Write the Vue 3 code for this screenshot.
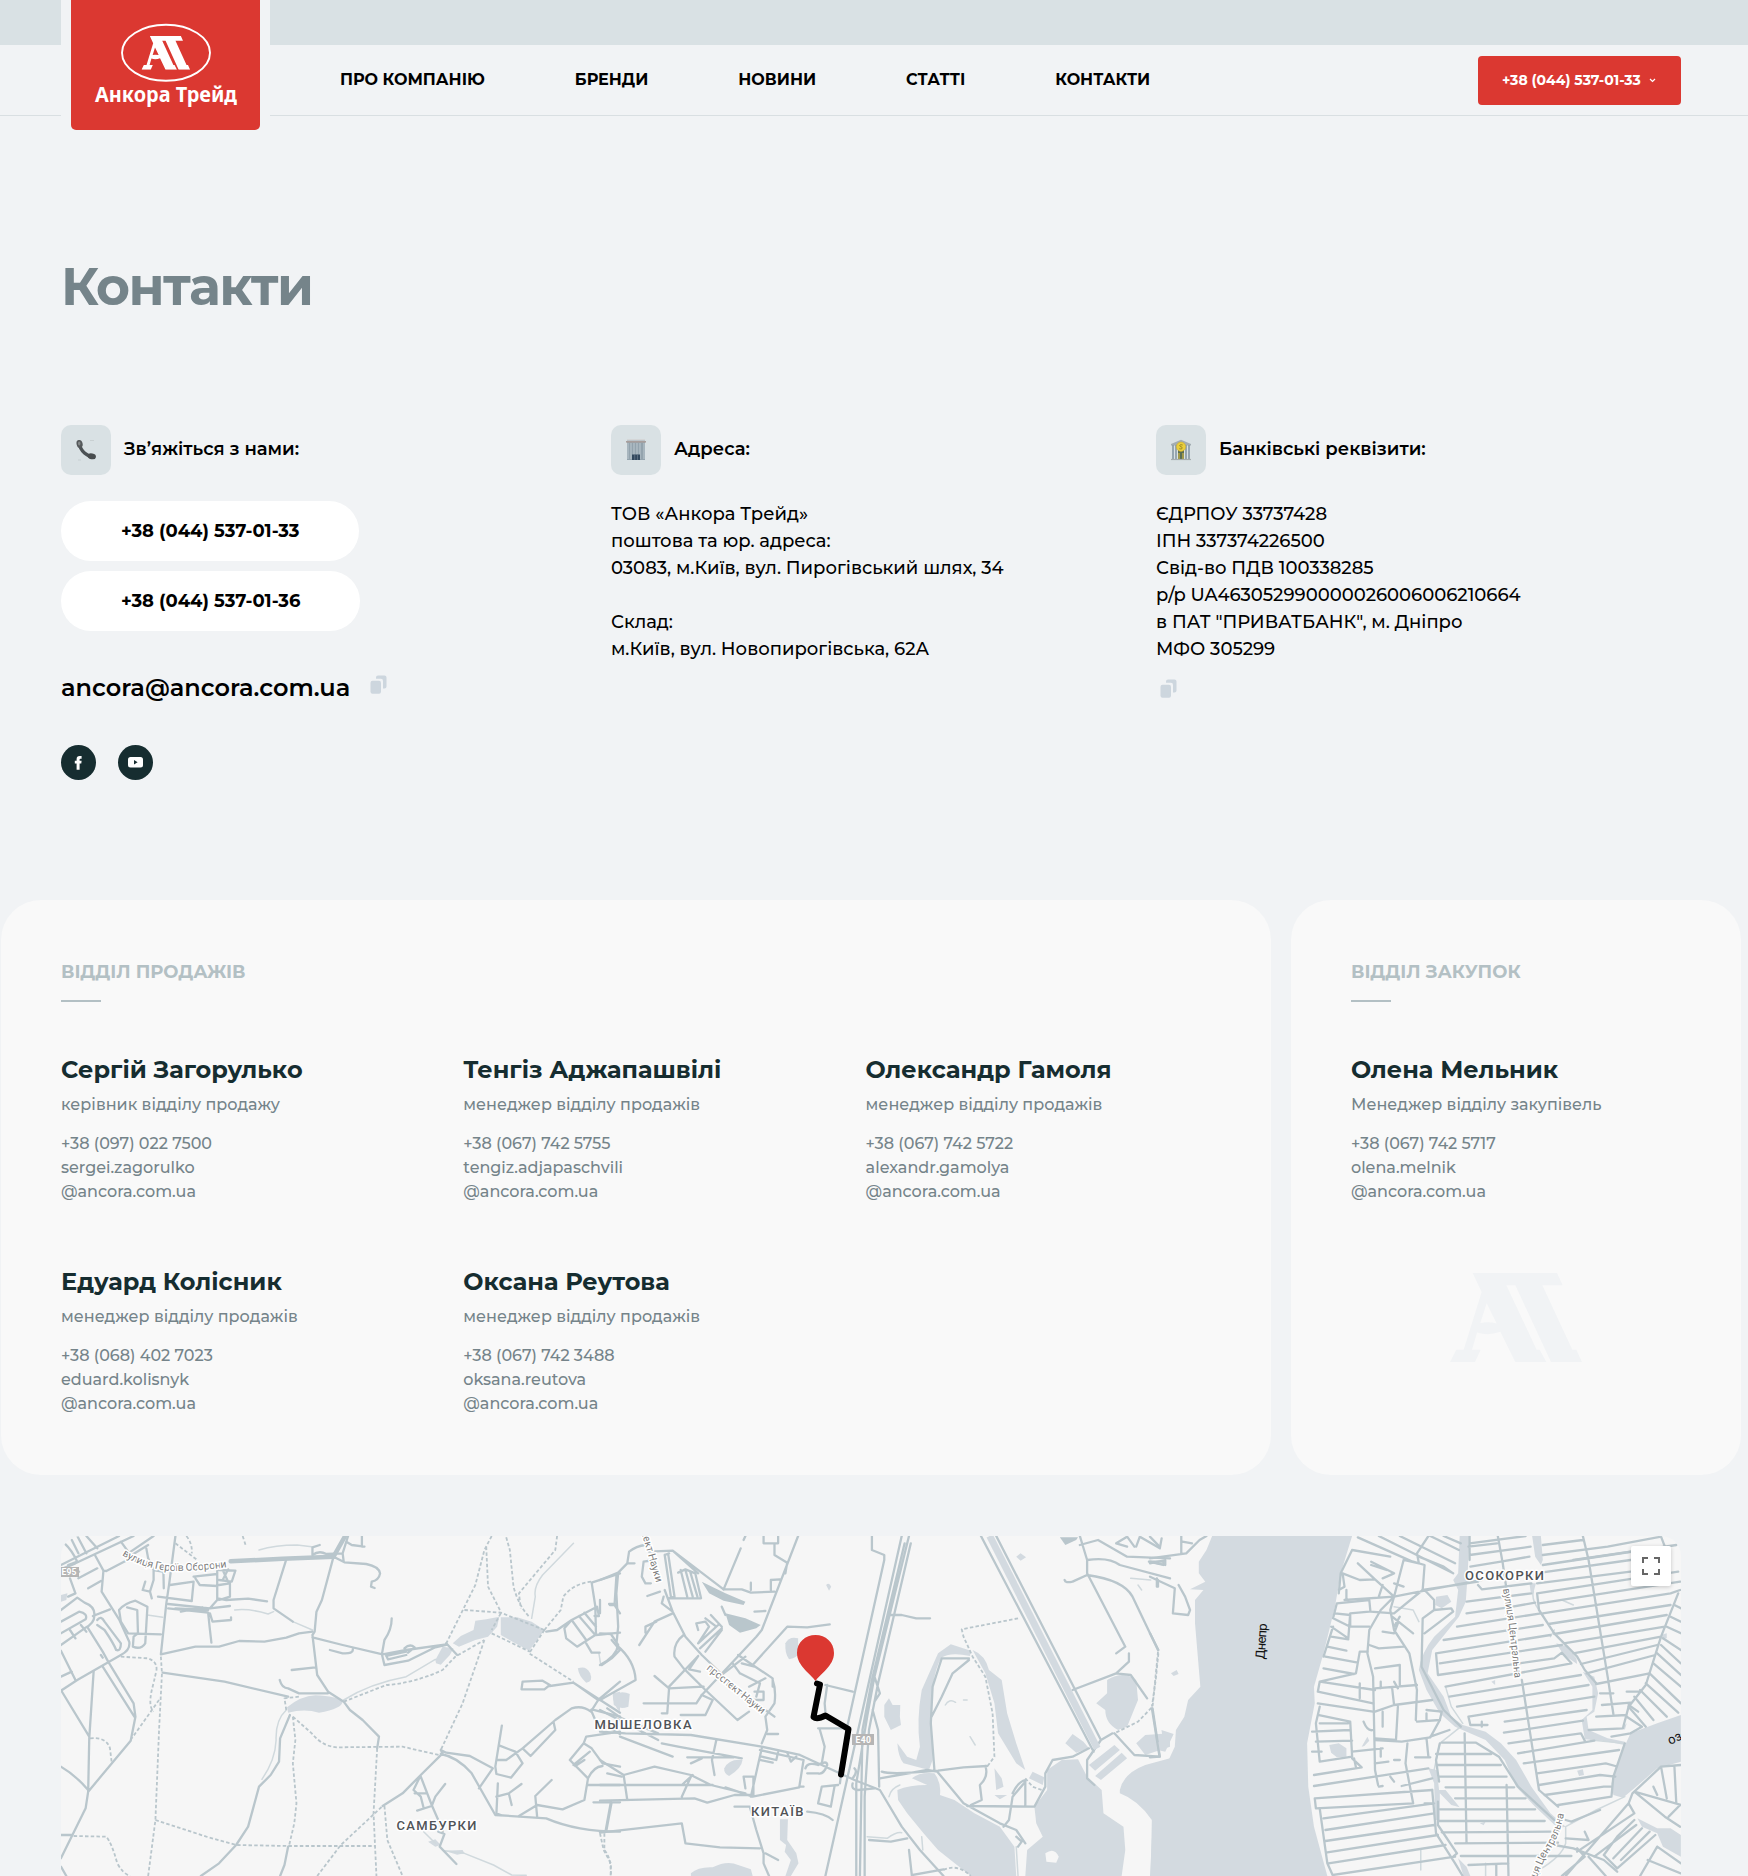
<script setup>
const nav = ['Про компанію', 'Бренди', 'Новини', 'Статті', 'Контакти']

const phones = ['+38 (044) 537-01-33', '+38 (044) 537-01-36']

const address = [
  'ТОВ «Анкора Трейд»',
  'поштова та юр. адреса:',
  '03083, м.Київ, вул. Пирогівський шлях, 34',
  '',
  'Склад:',
  'м.Київ, вул. Новопирогівська, 62А',
]

const bank = [
  'ЄДРПОУ 33737428',
  'ІПН 337374226500',
  'Свід-во ПДВ 100338285',
  'p/p UA463052990000026006006210664',
  'в ПАТ "ПРИВАТБАНК", м. Дніпро',
  'МФО 305299',
]

const departments = [
  {
    title: 'Відділ продажів',
    kind: 'sales',
    people: [
      { name: 'Сергій Загорулько', role: 'керівник відділу продажу', phone: '+38 (097) 022 7500', mail: 'sergei.zagorulko' },
      { name: 'Тенгіз Аджапашвілі', role: 'менеджер відділу продажів', phone: '+38 (067) 742 5755', mail: 'tengiz.adjapaschvili' },
      { name: 'Олександр Гамоля', role: 'менеджер відділу продажів', phone: '+38 (067) 742 5722', mail: 'alexandr.gamolya' },
      { name: 'Едуард Колісник', role: 'менеджер відділу продажів', phone: '+38 (068) 402 7023', mail: 'eduard.kolisnyk' },
      { name: 'Оксана Реутова', role: 'менеджер відділу продажів', phone: '+38 (067) 742 3488', mail: 'oksana.reutova' },
    ],
  },
  {
    title: 'Відділ закупок',
    kind: 'purchase',
    people: [
      { name: 'Олена Мельник', role: 'Менеджер відділу закупівель', phone: '+38 (067) 742 5717', mail: 'olena.melnik' },
    ],
  },
]

const emblem =
  'M668 994H921L938 1025H877L967 1187H979L996 1218H903L796 1025H769L860 1187H869L889 1218H796L751 1142Q715 1153 681 1144L666 1187H692L675 1218H600L619 1187H641L695 1042ZM710 1070L691 1120Q715 1116 740 1121Z'

/* Map tiles: each one has its own coordinate space, scaled into the map. */
const tiles = [
  {
    id: 'west',
    transform: 'translate(-11 -6) scale(.36352 .33333)',
    water: [
      'M652 532Q690 498 730 496Q790 498 804 515Q805 535 740 548Q700 535 655 548Z',
      'M1108 340L1130 318L1165 300L1170 272L1200 268L1236 260L1230 290L1205 320L1170 330L1125 350Z',
      'M1240 262L1285 262L1325 275L1360 300L1318 362L1280 340L1240 315Z',
      'M1060 390L1080 350L1110 355L1100 375L1075 404L1062 400Z',
      'M1452 415Q1475 405 1486 430Q1495 455 1475 458Q1455 440 1452 415Z',
      'M1548 490L1568 485V545Q1550 530 1548 490Z',
      'M1040 935L1060 928L1075 945L1060 950ZM1085 962L1135 960L1140 970L1120 974Z',
      'M30 195L48 190L45 210L30 215Z',
    ],
    major: ['M497 94L640 86L780 80', 'M780 80L812 18'],
    roads: [
      'M30 105L85 75L190 18M30 118L70 100L230 18M75 18L100 70M100 18L130 55M60 30L78 70M40 40Q60 60 75 95L50 105M78 145L130 115M60 130L80 125M195 35L215 65M155 123L230 80M215 70L285 18M225 75L270 45M125 78L147 122L142 185L190 268L218 335Q222 360 195 375L75 450L30 482M147 122L155 123M105 175L140 153M50 200L70 190L55 145',
      'M30 240L75 203L95 218Q125 230 122 258Q122 280 95 295L30 345M30 275L80 245Q105 250 98 268L30 310M55 300L70 325M85 285L100 305M118 258L165 238M130 270Q140 255 150 275L195 340Q195 365 182 360Q175 340 150 300L130 285M105 295L145 365L160 395L230 520L235 560L222 632L105 785M145 410L232 560M30 362L70 450M30 440L60 425M140 375L145 383M120 425L108 625L105 785L98 835L30 985M30 480L108 620M30 710Q70 735 105 780M30 1010L45 1038M30 915L60 915',
      'M345 18L328 160L320 220L305 373L400 350L465 350L520 333L590 335L650 323L685 310L722 305M310 428L480 455L655 500M190 240Q205 220 235 212L268 230L262 340Q250 360 228 350L230 320L242 310L240 240L212 232M190 240L195 275L215 310L305 313M265 55L270 85L285 120L285 150L275 185L255 180L262 155M275 185L280 205M312 125L313 175M285 120L310 125M297 200L390 213L395 155L330 165M395 140L460 132M400 145L412 165L460 168M460 115V210L440 235L325 222M325 235L435 248L440 300L444 338M345 235L435 240M360 245L420 232M440 235L495 228M440 250L447 275L498 270V262M465 120L510 122L500 155L465 150M475 120L490 155M490 118L475 150M465 165L495 160V200L465 210L485 205M460 205L485 210L545 206L597 214',
      'M650 88L615 210V235L668 275M780 80L748 210L733 245L728 305L722 315L735 435L765 485L808 515L825 540L860 570L905 620L900 655M722 322L805 345L915 373L980 360L1090 343M940 265Q940 300 920 330L913 373L920 405L985 392L1060 352L1090 345M925 378L980 365M925 378L930 388L980 375M975 355Q990 340 1003 352L985 368M1090 340L1120 375M770 360L805 370Q835 372 833 358M665 420L730 412M632 450Q638 475 655 475L685 490H765M780 80L810 97L870 102Q905 110 908 130Q905 150 885 155L883 170L893 174M722 75V52L742 45M722 75Q740 60 760 72L805 70L820 18M815 35L830 45L865 50M858 18V50M805 70L808 95',
      'M660 555L633 625L630 695L607 735L575 770L545 890L512 945L465 1000L415 1038M655 950L645 1005L633 1038M1075 660L1080 670L1020 735L970 790L915 828M1075 672Q1120 680 1160 730L1225 855L1365 865Q1450 905 1568 905M1075 660L1090 668L1155 678L1218 715L1180 775M1020 735L1000 780L1020 800L1028 835M1020 740L1050 825L1080 900V910M1003 790H1035M1010 842L1050 828L1060 800L1087 762M1068 905L1085 912L1072 950L1118 1002',
      'M1243 587L1225 710L1228 732L1268 743L1300 700L1280 665L1237 647M1228 690L1255 690L1300 655L1390 570L1435 535Q1465 525 1488 545L1508 510L1568 455M1385 575L1390 600L1322 678L1300 655M1488 540L1500 570L1568 612M1490 538L1568 560M1232 760L1228 850L1240 855M1228 800L1262 790L1297 762M1262 790L1270 825M1290 858L1340 825L1410 838L1470 810L1480 745L1430 690L1468 640L1490 655L1520 700L1568 710M1440 705L1485 665M1445 708L1470 690M1480 745Q1495 710 1520 708M1468 640L1475 620L1568 605M1480 765H1568M1495 817H1568M1545 817L1530 905M1340 860L1335 798L1380 750',
      'M1297 478L1300 455L1355 452L1375 465L1360 478ZM1375 468L1440 458L1568 548M1440 458L1508 510M1490 158L1500 228L1502 315L1568 308M1490 158L1568 130M1365 305L1395 300L1435 270L1505 230L1510 258L1498 258M1435 270L1415 295L1420 325L1450 350L1500 315M1435 270L1475 330M1455 258L1500 315M1470 248L1502 290M1475 340L1490 368H1512M1545 330L1568 360L1545 385L1518 405M1558 140L1553 225L1568 250M1540 225H1553',
    ],
    minor: [
      'M575 60Q620 45 680 45L720 50M508 240Q550 235 600 252L615 245M668 275L722 300M808 510Q880 460 980 440L1060 388M1440 40L1355 135Q1330 170 1335 200L1325 265M650 540Q620 570 622 630Q620 690 583 748M268 255L310 262M1028 905L1060 940M1085 962L1140 970L1220 1005L1270 1035L1310 1036M1510 370L1515 405',
    ],
    paths: [
      'M305 380L308 430L300 600L290 870L270 1038M195 380L270 385Q295 395 293 420Q285 460 280 480Q270 530 285 545M300 510L225 625M110 625Q155 620 165 655L170 700M65 918L155 920Q170 940 185 1000Q200 1030 220 1038M290 870L430 920L512 945L655 948H895M345 40L405 90M375 18Q392 40 390 70M530 18L538 45',
      'M650 540L645 505L685 500M808 515L925 465Q1000 460 1080 420L1115 380L1195 330M668 560L675 630L668 700L678 820L672 880L658 945M668 560L720 610Q750 650 790 652L970 650L1070 675M900 655L890 850L898 1038M735 1038L800 945L915 828M920 828L928 930L970 1038M1195 330L1135 520L1075 660',
      'M1215 18L1195 60L1170 165L1090 340M1200 50L1205 170L1240 245M1140 240L1240 248L1360 300M1255 22L1265 60L1275 170Q1290 230 1320 262M1395 18L1390 60L1290 190L1295 235M1360 300L1318 370L1440 455M1215 310L1320 365M1360 300L1405 240L1412 200Q1440 160 1490 155M1240 250L1215 300M1525 910V960Q1545 985 1542 1038',
    ],
  },
  {
    id: 'centre',
    transform: 'translate(539 -6) scale(.36352 .33333)',
    water: [
      'M510 340Q520 318 545 325V370Q545 382 520 388Q508 370 510 340Z',
      'M35 495Q60 480 82 492L78 530Q55 540 38 525Z',
      'M342 715Q355 685 392 690Q390 715 355 738Q340 730 342 715Z',
      'M622 165Q630 155 636 170L630 182ZM1145 80L1157 70L1172 82L1157 92Z',
      'M782 525L795 505L805 525L826 525L825 560L828 585L800 600L782 560ZM818 640L845 680L870 690L880 650Q870 570 885 480L930 370L965 343L1020 362L1018 378Q960 365 938 385Q910 440 912 560L915 690L905 720L835 700Q820 680 818 640Z',
      'M1025 360Q1060 375 1070 420L1105 450L1120 550L1145 640L1170 720L1145 700L1095 610L1085 520L1060 430Z',
      'M818 780Q850 765 900 765L858 745Q880 725 920 730Q940 760 935 795L975 810L1030 850L1100 890L1140 950L1145 1038H1020L930 960L890 910L845 850L820 810Z',
      'M1200 880L1195 830L1230 780V720L1270 690L1315 688L1340 740L1380 780L1385 850L1440 890L1445 960L1435 1038H1170L1175 960L1218 920Z',
      'M1430 780Q1440 730 1500 705L1568 685V1038H1515L1518 870Q1480 810 1430 790Z',
      'M1365 520L1395 490V450Q1440 420 1475 450L1480 510L1450 590L1425 600Q1390 580 1390 540Z',
      'M1280 640L1300 612L1330 635L1345 655L1310 668ZM1475 640L1500 615L1568 610V650L1500 675Z',
      'M1345 705L1415 645L1430 660L1362 722ZM1362 738L1435 668L1450 685L1378 750Z',
      'M1085 715L1105 745L1110 770L1090 780ZM1085 795H1120L1100 808ZM1180 745L1190 725L1222 742L1218 765Z',
      'M495 868H517L515 930L540 970L546 1000L525 1038H510L525 990L508 965L512 945L495 930Z',
      'M250 1030Q270 1010 310 1012Q350 990 380 1005L415 1018L420 1038H250Z',
    ],
    holes: ['M1225 970Q1250 950 1262 980L1255 998L1228 995Z'],
    major: ['M1072 18L1368 655'],
    heavy: ['M280 155L345 190L400 215L395 225L340 212L300 190ZM345 250L400 265L442 285L430 295L385 308L355 285Z', 'M1265 22H1315L1310 30L1280 45Z'],
    roads: [
      'M545 18L445 300L430 320L280 495M387 55L340 178M400 18L395 30M450 18V40H490V18M480 42V75L515 98M515 98L510 130M470 180V150L495 148M340 178L390 178L415 188L480 185M415 158V180M75 100L80 65Q100 48 125 45M75 100L50 128L0 150M75 100H95M50 128L45 190L50 290L45 345Q95 390 98 450L0 510M25 222H45M0 310L30 312L50 345Q45 380 0 405M0 210V250',
      'M135 65L200 62L340 178M200 62L270 130M178 75L195 200M188 75L205 200L190 205H278L262 130L235 118L215 128M222 120L240 200M235 120L255 200M248 125L268 200M178 75L190 70M120 95L150 90M120 95L115 140L125 160L140 160M178 180L200 245L235 320L280 375L380 480L480 560M165 185L130 198M175 200L170 220L200 245M200 250L150 275L108 345M155 275L125 290V308',
      'M230 315Q200 340 205 380L230 415L290 480L378 570L410 545M150 438L190 475L285 470M190 475L185 550H170M120 520H265L280 495L310 510L290 555H222M270 378L190 470M270 378L245 418L275 425M345 255L335 230M425 245L455 243M270 340L325 285M275 355L335 295M290 365L335 300M270 300L265 280L290 275L300 290L270 340M290 265L320 290M305 255L335 290M420 405L515 290L570 292L632 283M420 405L380 375M340 430L400 380M425 410L390 400M420 405L475 445V470M365 400L385 430M385 430L440 460L430 500M410 470L455 445M425 485H450V510H415M475 450Q485 480 480 520L455 560L460 600L445 640M460 612H490',
      'M830 18L620 1038M850 18L755 440L735 560L705 760V1038M838 40L748 450L722 600L715 1038M855 40L765 460L740 600L728 800V1038M748 18V60L782 75V90L680 590L660 760M620 465L695 485M625 465L618 520L620 545M600 595H680M605 600L618 650L610 700M755 440L770 490L755 515M750 540L765 600L768 770M800 255L830 255L870 265H908',
      'M0 605L70 610L250 615L445 650M445 655L415 800M445 650L550 675L700 750L770 780L830 890L880 960L945 1038M0 540L160 630M20 535L60 565L160 610M55 620L200 680M320 630L308 690L315 735M240 682H368M250 700L280 685M170 640L215 650L390 685M0 690L65 735L150 710L250 735L305 765L400 790M65 735L75 810M0 765L225 765L310 765M225 765L255 735M345 772L420 800L548 772L560 690L440 660M250 740L225 800M0 812L260 805L295 818L370 795H415M395 740H422V795M395 740L400 775M370 830H412L430 900L450 970V1000L465 1038M30 815L15 905L0 908L225 880L235 940L330 952L440 955M455 970L490 990M548 770H560M515 668L525 695L540 680M565 715Q570 695 600 705M600 705Q625 690 625 705Q615 735 600 730L570 730M445 680L485 690L490 665M440 690L475 698',
      'M655 765L610 770L600 820L635 830L645 770M570 845Q620 850 640 870M695 760Q690 780 710 780L755 775M700 715Q710 725 695 745M770 745L900 720L928 725L1000 820L1100 880L1145 900L1170 940M775 725Q800 735 930 722L1000 712L1065 708M1060 708Q1070 740 1045 765L1050 810L1020 825M1010 828L1195 830L1225 770L1225 730L1245 690L1300 680L1345 655M1015 385L940 385L915 470L910 580L920 720M1015 390L970 430L940 500L912 560M1135 790Q1150 755 1170 750V825M1170 755L1135 800L1125 870L1110 890M1145 920L1160 935L1150 950M740 930L800 935L845 925M850 960L858 1038M860 1035L945 1018',
      'M1048 18L1358 665M1090 18L1378 630L1340 690V745L1360 765M1320 18L1340 90V130L1445 350L1420 370M1455 370L1455 395L1420 430L1300 480M1420 430L1460 435L1505 505M1340 90Q1400 80 1430 105L1568 145M1320 45L1370 30L1450 80L1568 85M1278 150Q1280 160 1300 155L1340 135Q1440 150 1465 200L1535 360M1420 40L1450 50M1420 40L1450 20L1470 50M1475 50L1485 20L1540 55L1545 25M1510 95H1550V105L1510 95M1520 535L1540 680L1470 675L1415 610M1378 630L1410 610M1535 150V170M20 730L60 740',
    ],
    minor: ['M735 920L790 925Q815 905 830 908M795 800Q800 775 825 765M885 920L888 960M1145 950L1150 1038M1018 620L1032 645M950 525Q960 505 978 517M1000 510H1010M1460 145L1515 150M1480 165L1490 180'],
    paths: [
      'M1150 265L995 298L1000 320L1025 380L1060 440L1080 550L1085 680L1065 710M1535 365L1520 530L1480 575L1415 610M0 910L10 960L30 1000V1038M945 1020Q985 1000 1020 1038M1170 745L1190 770L1215 780',
    ],
  },
  {
    id: 'east',
    transform: 'translate(1089 -6) scale(.38137 .33333)',
    water: [
      'M163 18H530L500 130L485 230L455 370L430 470L432 520L412 640L415 770L430 890L465 1038H0L8 860L0 780V712H40L65 650L68 600L90 560L100 510L132 470L118 280V210L140 180L105 178L145 155L128 130V95L148 60Z',
      'M812 18H838L832 150L828 215L810 260L740 360L728 430L770 500L790 560L820 585L880 605L920 640L960 690L1000 770L1050 850L1090 890L1070 895L1010 830L960 770L930 690L880 630L800 590L760 550L725 480L705 420Q710 370 745 320L800 260L808 180L795 150L808 130Z',
      'M1002 18H1025L1030 90L1025 105L1010 80ZM995 160H1012L1005 190L998 185ZM1065 340L1090 348L1118 385L1120 402L1085 375ZM1135 425L1165 440L1175 490L1165 545L1145 560L1150 600L1200 625L1245 635V645L1185 632L1140 628L1132 570L1160 540V470Z',
      'M1392 555L1330 580L1260 610L1240 660L1210 760L1215 795L1240 803L1270 775L1330 715L1392 695Z',
      'M1278 865L1330 895L1365 895L1392 915V980L1345 950L1330 910L1290 890Z',
      'M470 645L495 640L515 655V680L490 682L475 668ZM750 200L780 195L790 215L765 235L748 225ZM555 650L570 620L575 632L562 648Z',
      'M1340 315L1355 310V325L1342 328ZM1120 722L1135 718L1138 735L1125 738ZM895 455L905 450V465ZM865 880L880 875L875 886ZM55 430L70 420L75 432L62 438ZM30 600L62 612L40 665L0 655V638L35 635Z',
      'M730 715L752 720L758 780L775 780L812 832L790 825L760 790V870L748 870L745 760ZM808 985L830 1010L840 1038H822ZM1240 590L1250 580L1245 600Z',
    ],
    major: [],
    roads: [
      'M530 60L500 130L495 190M530 60L630 80M545 22L688 95M600 18L795 130M655 18L800 100M735 18L810 60M770 18L815 40M730 18L700 70L705 100L665 90L640 200L605 240L575 300L570 370L585 440L590 720L598 765M690 95L720 105L715 180M705 80L770 110L795 130M495 180L510 170L505 130L550 150L590 148L640 200L510 210M545 100L590 148M580 95L640 130L610 145M620 120L580 105M640 160L665 170M610 165L600 200M515 180V210',
      'M490 220L575 210L578 245L640 250L715 180L860 155M490 220L480 265L525 290L575 290M485 250L525 255V290M575 245L525 250L520 325L475 290M640 200L750 175L870 150M640 200L630 240L640 300L680 370L700 480L697 570M720 180L745 210V240L715 265L712 410L770 540L815 590M635 260L690 310M640 290L655 260M745 240L790 235L795 245L720 310M575 345L600 355L665 350M610 305L640 310L650 280M455 380L480 290M475 320L520 328M465 350L515 362M460 380L545 398M455 415L535 432M445 455L540 430L550 365H570M445 455L440 485L585 520M445 455L590 480M550 460V505M590 475L700 465M590 415L655 405V465M605 455V475M640 455L650 475M635 475L640 525L590 545M440 520L585 545M640 525L740 510M650 530L645 630L590 625M610 545V590M700 575L760 570L765 545L725 540M725 550V570',
      'M445 530L435 580L445 695L530 680L525 575L440 555M425 605L525 600M435 635L530 632M425 665H450M530 685L555 712M530 665L610 655M535 685L540 712M445 580L520 580M560 575Q570 605 585 600M675 640L670 700L690 820L435 835L432 805L740 780M430 735L555 712M430 768L730 715M590 700L625 695M640 690H655M605 655V680M660 768L740 745M600 770L610 768M630 740L640 755M695 682H735M590 630L660 635L735 622L760 570M725 625L730 680M735 620L785 600',
      'M740 780L750 910L800 1000L820 1038M445 835L465 1000L480 1038M455 865L745 820M460 900L745 850M460 933L745 885M465 967L755 915M468 1000L775 945M480 1035L800 980M720 820H740M760 640L750 690L758 755M755 815L755 885L805 970L795 980',
      'M765 638H855L915 680L965 770L1060 870M750 672L895 672M755 705H920M758 740H935M775 772H955M800 805H985M760 838H1010M755 873H1035M765 907L1050 905M800 940L1070 938M815 978L1105 978M835 1005L940 1000M825 610L830 940M935 765L940 1038M908 1005V1038M838 75L998 50M835 50L910 40M838 40L985 18M838 18V90M840 110L920 95L995 80M860 165L870 178L1000 160M830 215L1000 190M830 250L940 232L1010 218M805 290L1025 250M770 330L1030 285M750 370L1050 315M750 370L755 435L1060 385L1080 368L1105 400L775 470M760 400L1080 345M785 500L1130 435M805 530L1150 465M835 560L1165 500M835 560L840 585L885 585M870 575V590M930 575L1145 540M928 608L1135 572M940 640L1130 610L1140 632M965 670L1165 632M980 700L1230 660',
      'M912 18L925 100L935 180M975 450L1020 780L1070 830M1135 18L1150 90L1200 440L1215 552M1030 45L1135 30M1030 75L1200 50L1340 20M1030 105L1380 45M1025 128L1260 90M1015 160L1260 125M1015 190L1300 140L1385 125M1020 220L1390 155M1030 250L1365 190L1390 180M1045 282L1365 225M1060 312L1355 255M1085 340L1350 290M1110 370L1340 320M1130 402L1330 345M1145 430L1325 375M1170 462L1310 430M1015 190L1020 240L1060 310L1120 380L1140 420L1170 460M1340 20L1350 50M1385 190L1340 320L1300 465L1255 530L1240 595M1180 490H1215M1250 485H1285M1185 525L1260 518M1170 560L1250 555M1150 600L1240 595M1210 620L1260 610M1255 525L1280 545M1250 560L1290 590L1260 610',
      'M1375 225L1392 235M1365 260L1392 275M1355 290L1392 310M1345 325L1392 360M1340 345L1392 400M1330 370L1392 435M1320 400L1392 470M1310 430L1392 520M1300 460L1385 548M1285 480L1355 560M1270 500L1320 570M1255 530L1300 590',
      'M1015 730L1195 700L1220 708M1020 765L1180 735L1220 740M1035 795L1190 770H1210M1070 825L1210 800M1245 640L1215 740L1210 800M1392 705L1340 710L1265 790L1255 820L1090 1038M1255 820L1270 850L1120 965M1090 870L1105 875L1180 840M1340 710L1355 805M1375 708L1380 820M1270 785L1392 825M1270 785L1350 860L1390 890M1390 825L1360 860M1320 770L1330 795M1060 945L1110 955L1190 990L1225 1025M1120 955L1140 980L1080 1038M1190 975L1225 920L1270 870M1165 980L1275 885M1215 985L1290 895M1235 990L1310 905M1190 975L1225 1015L1325 915M1330 950L1285 1038M1330 950L1392 1000M1305 990L1392 1030M1150 980L1195 1038M1090 925L1150 930L1140 905',
      'M0 20L25 50M0 85L95 70L130 30L148 18M0 100L40 90V105L0 95M82 18V70M85 35L110 40M0 140L65 175L60 250L100 255L105 240L92 200L75 165M18 145V170M0 310L22 360M5 535L25 680L0 682M1110 90L1260 65',
    ],
    minor: ['M815 590L760 640L745 720M1245 800L1170 840L1090 890V940Q1080 980 1020 1020M1080 210L1110 225M1060 300L1050 320M640 230L690 240L705 275M1155 630L1245 640M775 470L790 530L820 580M710 960V1020M880 1000V1038M1020 240Q1000 210 1005 185'],
    paths: ['M22 370L15 450L5 530'],
  },
]
</script>

<template>
  <div class="page">
    <header class="header">
      <div class="strip"></div>
      <div class="bar">
        <nav class="nav">
          <a v-for="item in nav" :key="item">{{ item }}</a>
        </nav>
        <button class="call">
          <span>+38 (044) 537-01-33</span>
          <svg width="7" height="5" viewBox="0 0 7 5"><path d="M1 1L3.500 3.500L6 1" fill="none" stroke="#fff" stroke-width="1.2" /></svg>
        </button>
      </div>
      <a class="logo">
        <svg width="189" height="130" viewBox="0 0 189 130">
          <ellipse cx="95" cy="52.800" rx="44" ry="28" fill="none" stroke="#fff" stroke-width="1.900" />
          <svg x="70.500" y="36" width="48.600" height="33.700" viewBox="600 994 396 224" preserveAspectRatio="none">
            <path :d="emblem" fill="#fff" fill-rule="evenodd" />
          </svg>
          <text x="24" y="101.500" textLength="142" lengthAdjust="spacingAndGlyphs">Анкора Трейд</text>
        </svg>
      </a>
    </header>

    <main>
      <h1>Контакти</h1>

      <section class="contacts">
        <div class="col reach">
          <div class="head">
            <span class="tile">
              <svg width="22" height="22" viewBox="0 0 22 22">
                <path d="M4 3.500Q5 10 9.500 14T19 17.800" fill="none" stroke="#4c5255" stroke-width="3.400" />
                <ellipse cx="4.600" cy="4.900" rx="3" ry="4" transform="rotate(-15 4.600 4.900)" fill="#55595b" />
                <ellipse cx="16.800" cy="17.300" rx="4.200" ry="2.900" transform="rotate(12 16.800 17.300)" fill="#484c4e" />
                <ellipse cx="4.200" cy="4.600" rx="1.200" ry="2" fill="#85898a" />
                <path d="M15 1.500H19M3 21H6" stroke="#bec4c6" stroke-width=".6" />
              </svg>
            </span>
            <h2>Зв’яжіться з нами:</h2>
          </div>
          <div class="pills">
            <a v-for="p in phones" :key="p" class="pill">{{ p }}</a>
          </div>
          <div class="mail">
            <a>ancora@ancora.com.ua</a>
            <svg class="copy" width="17" height="19" viewBox="0 0 17 19"><rect x=".5" y="5.700" width="10.500" height="13" rx="2" /><path d="M6 3.700V2.500Q6 .5 8 .5H14.500Q16.500 .5 16.500 2.500V11.500Q16.500 13.500 14.500 13.500H13V6Q13 3.700 11 3.700Z" /></svg>
          </div>
          <div class="social">
            <a>
              <svg width="35" height="35" viewBox="0 0 35 35"><path d="M15.600 24.800V18.500H13.800V15.800H15.600V14.200Q15.600 11 18.700 11H20.600V13.700H19.300Q18.600 13.700 18.600 14.500V15.800H20.600L20.300 18.500H18.600V24.800Z" fill="#fff" /></svg>
            </a>
            <a>
              <svg width="35" height="35" viewBox="0 0 35 35"><rect x="10" y="12" width="15" height="10.500" rx="2.500" fill="#fff" /><path d="M16 15L19.600 17.300L16 19.500Z" fill="#162d30" /></svg>
            </a>
          </div>
        </div>

        <div class="col place">
          <div class="head">
            <span class="tile">
              <svg width="20" height="22" viewBox="0 0 20 22">
                <path d="M1 1.500H19V21H1Z" fill="#93a3ad" />
                <path d="M0 2H20V3.600H0Z" fill="#a89e9c" />
                <path d="M1 .8H19" stroke="#d0cccb" stroke-width=".7" />
                <path d="M2 4V20M5 4V20M8 4V16M11 4V16M14 4V20M18 4V20" stroke="#bcc8cf" stroke-width="1" />
                <path d="M6 15.500H14V21H6Z" fill="#33495e" />
                <path d="M8.700 16V21M11.500 16V21" stroke="#8190a0" stroke-width=".5" />
              </svg>
            </span>
            <h2>Адреса:</h2>
          </div>
          <p class="lines"><span v-for="(l, i) in address" :key="i">{{ l }}</span></p>
        </div>

        <div class="col bank">
          <div class="head">
            <span class="tile">
              <svg width="20" height="22" viewBox="0 0 20 22">
                <path d="M0 5L10 .8L20 5V6.500H0Z" fill="#a3adb2" />
                <path d="M2 6V20M5 6V20M15 6V20M18 6V20" stroke="#8598a4" stroke-width="1.600" />
                <path d="M7 11H13V20H7Z" fill="#596e55" />
                <path d="M8 14V20M12 14V20" stroke="#d0b747" stroke-width="1.200" />
                <path d="M0 20.500H20" stroke="#a5acae" stroke-width="1.200" />
                <circle cx="10" cy="7.800" r="4.700" fill="#e9cf3d" stroke="#cba526" stroke-width=".5" />
                <path d="M11.600 6C8.500 5 7.800 7.200 10 7.800S11.500 10.600 8.400 9.700" fill="none" stroke="#8e781a" stroke-width=".9" />
              </svg>
            </span>
            <h2>Банківські реквізити:</h2>
          </div>
          <p class="lines"><span v-for="l in bank" :key="l">{{ l }}</span></p>
          <svg class="copy" width="17" height="19" viewBox="0 0 17 19"><rect x=".5" y="5.700" width="10.500" height="13" rx="2" /><path d="M6 3.700V2.500Q6 .5 8 .5H14.500Q16.500 .5 16.500 2.500V11.500Q16.500 13.500 14.500 13.500H13V6Q13 3.700 11 3.700Z" /></svg>
        </div>
      </section>

      <section class="teams">
        <article v-for="d in departments" :key="d.kind" class="team" :class="d.kind">
          <h3>{{ d.title }}</h3>
          <div class="people">
            <div v-for="p in d.people" :key="p.name" class="person">
              <h4>{{ p.name }}</h4>
              <p class="role">{{ p.role }}</p>
              <p class="info">{{ p.phone }}<br />{{ p.mail }}<br />@ancora.com.ua</p>
            </div>
          </div>
          <svg v-if="d.kind === 'purchase'" class="mark" viewBox="600 994 396 224" preserveAspectRatio="none">
            <path :d="emblem" fill="#f1f3f5" fill-rule="evenodd" />
          </svg>
        </article>
      </section>

      <section class="map">
        <svg class="canvas" width="1620" height="340" viewBox="0 0 1620 340">
          <g v-for="t in tiles" :key="t.id" :transform="t.transform">
            <path v-for="(d, i) in t.water" :key="'w' + i" :d="d" class="water" />
            <path v-for="(d, i) in t.holes" :key="'o' + i" :d="d" class="land" />
            <path v-for="(d, i) in t.minor" :key="'n' + i" :d="d" class="road minor" />
            <path v-for="(d, i) in t.roads" :key="'r' + i" :d="d" class="road" />
            <path v-for="(d, i) in t.heavy" :key="'h' + i" :d="d" class="block" />
            <path v-for="(d, i) in t.major" :key="'m' + i" :d="d" class="road" :class="t.id === 'centre' ? 'canal' : 'major'" />
            <path v-for="(d, i) in t.paths" :key="'p' + i" :d="d" class="road trail" />
          </g>

          <path d="M756 147.500L759 148.500L752.500 181Q756 184 764.500 179.500L787.500 193L780 238.500" class="route" />
          <path d="M754.500 145C750 138 736 130 736 117C736 106 744.500 99 754.500 99S773 106 773 117C773 130 759 138 754.500 145Z" fill="#db3831" />

          <g class="badge">
            <rect x="-2" y="31" width="20" height="10" />
            <text x="0.500" y="39.300" textLength="15">E95</text>
            <rect x="791" y="198" width="22" height="11" />
            <text x="794.500" y="206.700" textLength="15.500">E40</text>
          </g>

          <path id="lane-a" d="M61 19Q80 32 109 35Q140 35 168 31" fill="none" />
          <path id="lane-b" d="M645 133L703 180" fill="none" />
          <path id="lane-c" d="M573 -26L583 5L596 50" fill="none" />
          <path id="lane-d" d="M1442 53L1448 90L1454 145" fill="none" />
          <path id="lane-e" d="M1467 362L1485 320Q1499 302 1504 273" fill="none" />
          <g class="street">
            <text><textPath href="#lane-a" textLength="108">вулиця Героїв Оборони</textPath></text>
            <text><textPath href="#lane-b" textLength="72">проспект Науки</textPath></text>
            <text><textPath href="#lane-c" textLength="76">проспект Науки</textPath></text>
            <text><textPath href="#lane-d" textLength="90">вулиця Центральна</textPath></text>
            <text><textPath href="#lane-e" textLength="92">вулиця Центральна</textPath></text>
          </g>
          <g class="district">
            <text x="335.500" y="294" textLength="80">САМБУРКИ</text>
            <text x="533.500" y="193" textLength="97">МЫШЕЛОВКА</text>
            <text x="690" y="280" textLength="52.500">КИТАЇВ</text>
            <text x="1404" y="43.700" textLength="79">ОСОКОРКИ</text>
          </g>
          <g class="river">
            <text transform="translate(1203.500 123.500) rotate(-86)" textLength="36">Днепр</text>
            <text transform="translate(1609 209) rotate(-25)">озеро</text>
          </g>
        </svg>
        <button class="full">
          <svg width="18" height="18" viewBox="0 0 18 18"><path d="M1 6V1H6M12 1H17V6M17 12V17H12M6 17H1V12" fill="none" stroke="#666" stroke-width="2" /></svg>
        </button>
      </section>
    </main>
  </div>
</template>

<style>
body {
  background: #f1f3f5;
}
</style>

<style scoped>
.page {
  position: relative;
  box-sizing: border-box;
  width: 1748px;
  height: 1876px;
  overflow: hidden;
  background: #f1f3f5;
  color: #000;
  font-family: Montserrat, Inter, 'Open Sans', sans-serif;
}
h1, h2, h3, h4, p { margin: 0; }
button { border: 0; padding: 0; font: inherit; }

.header { position: relative; }
.strip { height: 45px; background: #d9e1e4; }
.bar {
  display: flex;
  align-items: center;
  justify-content: space-between;
  box-sizing: border-box;
  height: 71px;
  padding: 0 67px 0 340px;
  border-bottom: 1px solid #d9dfe2;
}
.nav { display: flex; gap: 90px; }
.nav a {
  font-size: 16px;
  font-weight: 700;
  line-height: 20px;
  text-transform: uppercase;
}
.call {
  display: flex;
  align-items: center;
  gap: 8px;
  box-sizing: border-box;
  width: 203px;
  height: 49px;
  padding: 0 0 0 24px;
  border-radius: 4px;
  background: #db3831;
  color: #fff;
  font-size: 14px;
  font-weight: 700;
}
.logo {
  position: absolute;
  top: 0;
  left: 61px;
  height: 130px;
  padding: 0 10px;
  background: #f1f3f5;
}
.logo > svg {
  display: block;
  border-radius: 0 0 5px 5px;
  background: #db3831;
}
.logo text {
  fill: #fff;
  font: 700 21px 'Noto Sans', 'Open Sans', sans-serif;
}

h1 {
  padding: 139px 0 0 61px;
  color: #75848a;
  font-size: 52px;
  font-weight: 700;
  line-height: 64px;
  letter-spacing: -.03em;
}

.contacts {
  display: flex;
  height: 475px;
  padding: 106px 0 0 61px;
}
.reach { width: 550px; }
.place { width: 545px; }
.head { display: flex; align-items: center; gap: 13px; height: 50px; }
.head h2 {
  padding-bottom: 3px;
  font-size: 18px;
  font-weight: 600;
  line-height: 22px;
}
.tile {
  display: flex;
  align-items: center;
  justify-content: center;
  width: 50px;
  height: 50px;
  border-radius: 10px;
  background: #d9e1e4;
}
.pills {
  display: flex;
  flex-direction: column;
  align-items: flex-start;
  gap: 10px;
  margin-top: 26px;
}
.pill {
  box-sizing: border-box;
  height: 60px;
  padding: 0 60px;
  border-radius: 30px;
  background: #fff;
  font-size: 18px;
  font-weight: 700;
  line-height: 60px;
}
.mail {
  display: flex;
  align-items: flex-start;
  gap: 20px;
  margin-top: 42px;
  font-size: 24px;
  font-weight: 600;
  line-height: 30px;
}
.mail .copy { margin-top: 2px; }
.copy { fill: #cdd6de; }
.social { display: flex; gap: 22px; margin-top: 42px; }
.social a {
  width: 35px;
  height: 35px;
  border-radius: 50%;
  background: #162d30;
}
.social svg { display: block; }
.lines {
  margin-top: 26px;
  font-size: 18px;
  font-weight: 500;
  line-height: 27px;
}
.lines span { display: block; min-height: 27px; }
.bank .copy { display: block; margin: 16px 0 0 4px; }

.teams {
  display: flex;
  gap: 20px;
  padding-left: 1px;
}
.team {
  position: relative;
  box-sizing: border-box;
  height: 575px;
  padding: 60px 0 0 60px;
  border-radius: 40px;
  background: #f9f9f9;
}
.sales { width: 1270px; }
.purchase { width: 450px; }
.team h3 {
  color: #b3c0c4;
  font-size: 18px;
  font-weight: 700;
  line-height: 24px;
  text-transform: uppercase;
}
.team h3::after {
  content: '';
  display: block;
  width: 40px;
  height: 2px;
  margin-top: 16px;
  background: #b3c0c4;
}
.people {
  display: grid;
  grid-template-columns: repeat(3, 402.3px);
  grid-auto-rows: 212px;
  padding-top: 53px;
}
.person h4 {
  color: #162d30;
  font-size: 24px;
  font-weight: 700;
  line-height: 30px;
}
.role, .info {
  color: #75848a;
  font-size: 16px;
  font-weight: 500;
  line-height: 24px;
}
.role { margin-top: 8px; }
.info { margin-top: 15px; }
.mark {
  position: absolute;
  top: 373px;
  left: 159px;
  width: 132px;
  height: 89px;
}

.map {
  position: relative;
  width: 1620px;
  height: 340px;
  margin: 61px 0 0 61px;
  border-radius: 20px 20px 0 0;
  background: #f6f6f6;
  overflow: hidden;
}
.canvas { display: block; }
.water { fill: #d3dae0; }
.land { fill: #f6f6f6; }
.block { fill: #b9c6cc; }
.road {
  fill: none;
  stroke: #b9c6cc;
  stroke-width: 2.3px;
  stroke-linecap: round;
  stroke-linejoin: round;
  vector-effect: non-scaling-stroke;
}
.minor { stroke: #d0d9dd; stroke-width: 1.5px; }
.major { stroke-width: 4.5px; }
.canal { stroke: #d3dae0; stroke-width: 7px; stroke-linecap: butt; }
.trail { stroke-width: 1.8px; stroke-dasharray: 3.5 2.2; stroke-linecap: butt; }
.route {
  fill: none;
  stroke: #000;
  stroke-width: 6px;
  stroke-linecap: round;
  stroke-linejoin: round;
}
.canvas text { font-family: Roboto, sans-serif; }
.badge rect { fill: #b5b5b5; }
.badge text { fill: #fff; font-size: 8.5px; font-weight: 700; }
.street text, .district text {
  paint-order: stroke;
  stroke: #fff;
  stroke-width: 3px;
  stroke-linejoin: round;
}
.street text { fill: #7d7d7d; font-size: 10.5px; }
.district text { fill: #505357; font-size: 13px; font-weight: 500; }
.river text { fill: #111; font-size: 13px; }
.full {
  position: absolute;
  top: 10px;
  right: 10px;
  display: flex;
  align-items: center;
  justify-content: center;
  width: 40px;
  height: 40px;
  border-radius: 2px;
  background: #fff;
  box-shadow: 0 1px 4px rgba(0, 0, 0, .2);
}
</style>
